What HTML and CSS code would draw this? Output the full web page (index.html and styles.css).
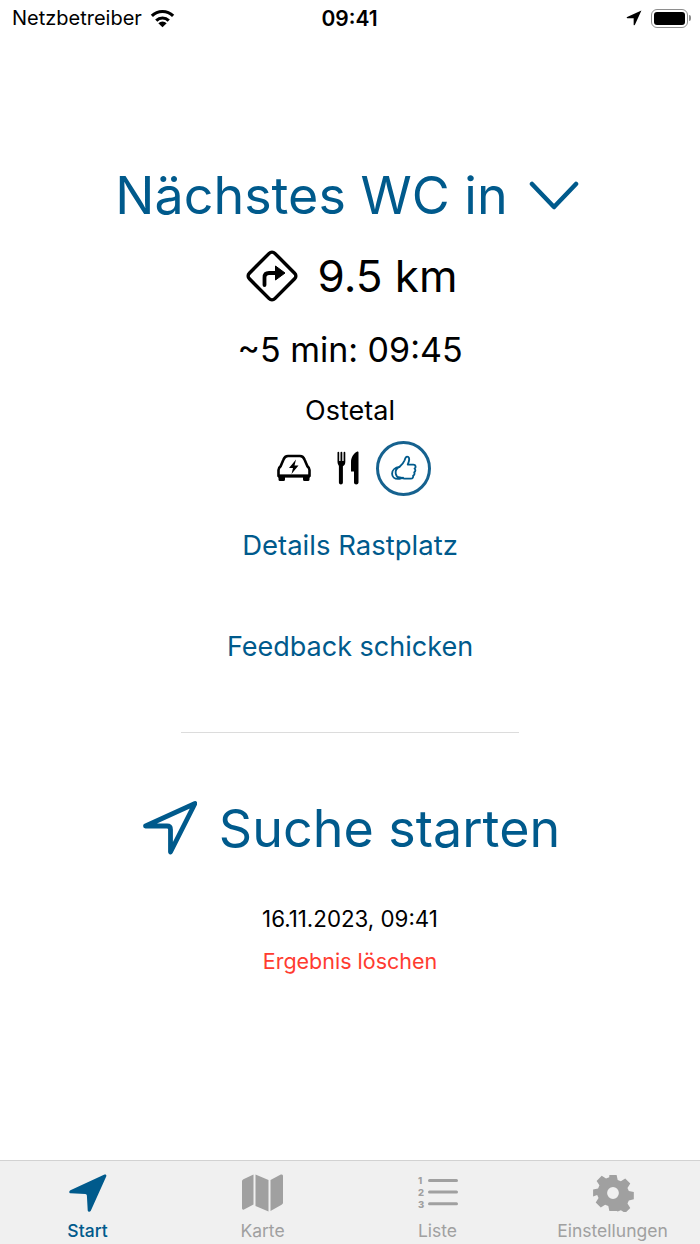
FILE: index.html
```html
<!DOCTYPE html>
<html lang="de">
<head>
  <meta charset="UTF-8">
  <meta name="viewport" content="width=device-width, initial-scale=1.0">
  <link rel="stylesheet" href="styles.css">
</head>
<body>
  <div class="screen">
    <div class="status-bar">
      <div class="status-left">
        <span>Netzbetreiber</span>
        <svg class="wifi" viewBox="0 0 24 18" width="25" height="19">
          <path d="M1.800 6.500A14.500 14.500 0 0 1 22.200 6.500M6 11A8.500 8.500 0 0 1 18 11" fill="none" stroke="#000" stroke-width="3"/>
          <path d="M12 17.500 8 13.500A5.500 5.500 0 0 1 16 13.500z"/>
        </svg>
      </div>
      <div class="status-time">09:41</div>
      <div class="status-right">
        <svg viewBox="0 0 14 14" width="16" height="16"><path d="M13.500.5 1 6.200c-.6.300-.4 1.100.2 1.100h5.500v5.500c0 .6.800.8 1.100.2z"/></svg>
        <div class="battery"><div class="battery-fill"></div></div>
        <div class="battery-cap"></div>
      </div>
    </div>

    <main class="content">
      <div class="title-row">
        <h1 class="title">Nächstes WC in</h1>
        <svg class="chevron" viewBox="0 0 50 30" width="50" height="30">
          <path d="M3 3 25 26 47 3" fill="none" stroke="#005a8c" stroke-width="4.500" stroke-linecap="round" stroke-linejoin="round"/>
        </svg>
      </div>

      <div class="distance-row">
        <svg viewBox="0 0 54 54" width="54" height="54">
          <rect x="9" y="9" width="36" height="36" rx="4" transform="rotate(45 27 27)" fill="none" stroke="#000" stroke-width="3.500"/>
          <path d="M19.500 36v-7.500c0-3 1.500-4.500 4.500-4.500H32" fill="none" stroke="#000" stroke-width="3.800" stroke-linecap="round"/>
          <path d="M30.500 17 40 24 30.500 31z" stroke="#000" stroke-linejoin="round"/>
        </svg>
        <span class="distance">9.5 km</span>
      </div>

      <div class="eta">~5 min: 09:45</div>
      <div class="place">Ostetal</div>

      <div class="feature-row">
        <svg class="icon-car" viewBox="0 0 36 28" width="36" height="28">
          <path d="M2.500 22v-6c0-1.500.8-2.700 2-3.600l3-6.900C8.300 3.300 9.700 2 12 2h12c2.300 0 3.700 1.300 4.500 3.500l3 6.900c1.200.9 2 2.100 2 3.600v6z" fill="none" stroke="#000" stroke-width="2.600" stroke-linejoin="round"/>
          <path d="M2 20.500h32v3H2zM2.500 23h6.500v2.500a1.500 1.500 0 0 1-1.500 1.500H4a1.500 1.500 0 0 1-1.500-1.500zM27 23h6.500v2.500A1.500 1.500 0 0 1 32 27h-3.500a1.500 1.500 0 0 1-1.500-1.500z"/>
          <path d="M20 5.500 13 14h4l-1.500 6 7-8.500h-4z"/>
        </svg>
        <svg class="icon-cutlery" viewBox="0 0 22 34" width="22" height="34">
          <path d="M.5 1.500c0-1 1.700-1 1.700 0V10h1.300V1.500c0-1 1.800-1 1.800 0V10h1.300V1.500c0-1 1.700-1 1.700 0V11c0 2.200-1 3.500-2.400 4.200V31.500c0 2.500-4 2.500-4 0V15.200C2 14.500.5 13.200.5 11z"/>
          <path d="M21.500 1.200V31.500c0 2.500-4.500 2.500-4.500 0V20.500h-3V11c0-4.500 2.500-8.500 6.300-10.400.6-.3 1.200 0 1.200.6z"/>
        </svg>
        <div class="thumb-badge">
          <svg viewBox="0 0 28 28" width="29" height="29">
            <path d="M10 12.500c2-1.800 4.200-4 5.100-6.500.4-1.500.8-3.500 2.400-3.500 2 0 2.300 2.300 1.700 4.500-.3 1.200-.9 2.300-1.100 3.200h5.400c2.500 0 2.800 3 1.200 3.900 1.200 1 .9 2.900-.4 3.500.7 1.200.2 2.800-1 3.200.4 1.500-.5 3-2.200 3h-6.100c-2.500 0-4-1.500-5.500-1.500" fill="none" stroke="#005a8c" stroke-width="1.800" stroke-linejoin="round" stroke-linecap="round"/>
            <path d="M10 12.500c-4 .5-7 3-7 6.500 0 3 2.500 5 5.500 5 2 0 3.600-.8 5-1.200M10 12.500C7 14 6 16.500 6.500 19c.4 2.200 2 3.800 3.500 4.300" fill="none" stroke="#005a8c" stroke-width="1.800" stroke-linecap="round"/>
          </svg>
        </div>
      </div>

      <a class="link details">Details Rastplatz</a>
      <a class="link feedback">Feedback schicken</a>

      <div class="divider"></div>

      <div class="search-row">
        <svg viewBox="0 0 54 54" width="54" height="54">
          <path d="M2.500 25 52 2.500 27.500 51 27.500 28.500C27.500 26 26 25 24 25z" fill="none" stroke="#005a8c" stroke-width="4.800" stroke-linejoin="round"/>
        </svg>
        <span class="search-label">Suche starten</span>
      </div>

      <div class="timestamp">16.11.2023, 09:41</div>
      <a class="clear">Ergebnis löschen</a>
    </main>

    <nav class="tab-bar">
      <div class="tab active">
        <svg viewBox="0 0 38 38" width="38" height="38"><path d="M35.500.6 1.400 16.200C-.2 17-.1 19.200 1.700 19.300l14.600.8c1 .1 1.500.600 1.600 1.600l.8 14.600c.1 1.800 2.300 2 3.100.4L37.200 2.400c.6-1.300-.4-2.400-1.700-1.800z"/></svg>
        <span>Start</span>
      </div>
      <div class="tab">
        <svg viewBox="0 0 41 38" width="41" height="38"><path d="M0 7.500c0-1 .5-1.700 1.400-2.200L11.500.5V30.500L2 35.500c-1 .5-2 0-2-1.200zM13.500.5l13 5.500V37.500L13.500 32zM28.500 6 38.800.6c1-.5 2.200.1 2.200 1.300V28.500c0 1-.5 1.800-1.400 2.200L28.500 37z"/></svg>
        <span>Karte</span>
      </div>
      <div class="tab">
        <svg viewBox="0 0 41 38" width="41" height="38">
          <rect x="11" y="5" width="30" height="3" rx="1.500"/>
          <rect x="11" y="16.600" width="30" height="3" rx="1.500"/>
          <rect x="11" y="28.300" width="30" height="3" rx="1.500"/>
          <text x="1" y="10" class="list-num">1</text>
          <text x="1" y="22" class="list-num">2</text>
          <text x="1" y="34" class="list-num">3</text>
        </svg>
        <span>Liste</span>
      </div>
      <div class="tab">
        <svg class="gear" viewBox="0 0 42 42" width="42" height="42"><path fill-rule="evenodd" d="M17 1h8l1.200 5.600 3.500 1.500 4.800-3.100 5.600 5.600-3.100 4.800 1.500 3.500 5.500 1.100v8l-5.500 1.200-1.500 3.500 3.100 4.800-5.600 5.600-4.800-3.100-3.500 1.500L25 41h-8l-1.200-5.600-3.500-1.500-4.800 3.100-5.600-5.600 3.100-4.800-1.500-3.500L-1 25v-8l5.500-1.100L6 12.400 2.900 7.600l5.600-5.600 4.800 3.100 3.500-1.500zM21 14.500a6.500 6.500 0 1 0 0 13 6.500 6.500 0 0 0 0-13z"/></svg>
        <span>Einstellungen</span>
      </div>
    </nav>
  </div>
</body>
</html>
```

FILE: styles.css
```css
* {
  box-sizing: border-box;
}

body {
  margin: 0;
  background-color: #fff;
  font-family: 'Inter', 'Liberation Sans', sans-serif;
  color: #000;
}

.screen {
  width: 700px;
  height: 1244px;
  display: flex;
  flex-direction: column;
  overflow: hidden;
}

.status-bar {
  height: 36px;
  flex-shrink: 0;
  display: grid;
  grid-template-columns: 1fr auto 1fr;
  align-items: center;
  padding: 0 9px 0 12px;
  font-size: 20px;
}

.status-left {
  display: flex;
  align-items: center;
  gap: 8px;
}

.status-time {
  font-size: 21px;
  font-weight: 600;
  margin-right: 4px;
}

.status-right {
  display: flex;
  align-items: center;
  justify-content: flex-end;
  gap: 9px;
}

.battery {
  width: 37px;
  height: 19px;
  border: 1.500px solid #8e8e8e;
  border-radius: 6px;
  padding: 2px;
}

.battery-fill {
  width: 100%;
  height: 100%;
  background-color: #000;
  border-radius: 3px;
}

.battery-cap {
  width: 2px;
  height: 6px;
  margin-left: -8px;
  background-color: #8e8e8e;
  border-radius: 0 2px 2px 0;
}

.content {
  flex: 1;
  display: flex;
  flex-direction: column;
  align-items: center;
  padding-top: 122px;
}

.title-row {
  display: flex;
  align-items: center;
  gap: 21px;
  height: 74px;
  padding-right: 6px;
}

.title {
  margin: 0;
  font-size: 52px;
  font-weight: 400;
  color: #005a8c;
}

.chevron {
  margin-top: 2px;
}

.distance-row {
  display: flex;
  align-items: center;
  gap: 18px;
  margin-top: 16px;
  margin-left: 3px;
  height: 56px;
}

.distance {
  font-size: 44px;
}

.eta {
  font-size: 34px;
  margin-top: 24px;
  line-height: 44px;
}

.place {
  font-size: 27px;
  margin-top: 22px;
  line-height: 34px;
}

.feature-row {
  display: flex;
  align-items: center;
  margin-top: 12px;
  margin-left: 6px;
  height: 56px;
}

.icon-cutlery {
  margin-left: 25px;
}

.thumb-badge {
  width: 55px;
  height: 55px;
  margin-left: 17px;
  border: 3px solid #16628f;
  border-radius: 50%;
  display: flex;
  align-items: center;
  justify-content: center;
}

.link {
  color: #005a8c;
  line-height: 34px;
}

.details {
  font-size: 27.500px;
  margin-top: 32px;
}

.feedback {
  font-size: 27px;
  margin-top: 68px;
}

.divider {
  width: 338px;
  height: 1px;
  background-color: #dcdcdc;
  margin-top: 68px;
}

.search-row {
  display: flex;
  align-items: center;
  gap: 22px;
  margin-top: 62px;
  margin-left: 3px;
  height: 66px;
}

.search-label {
  font-size: 52px;
  color: #005a8c;
}

.timestamp {
  font-size: 22.300px;
  margin-top: 44px;
  line-height: 28px;
}

.clear {
  font-size: 21.500px;
  color: #ff3b30;
  margin-top: 14px;
  line-height: 28px;
}

.tab-bar {
  height: 84px;
  flex-shrink: 0;
  display: grid;
  grid-template-columns: repeat(4, 1fr);
  background-color: #f0f0f0;
  border-top: 1px solid #d2d2d2;
}

.tab {
  display: flex;
  flex-direction: column;
  align-items: center;
  padding-top: 13px;
  color: #a0a0a0;
  font-size: 17.500px;
  font-weight: 400;
  fill: #a0a0a0;
}

.tab svg {
  display: block;
  height: 38px;
}

.tab span {
  margin-top: 9px;
  line-height: 20px;
}

.tab.active {
  color: #005a8c;
  fill: #005a8c;
  font-weight: 500;
}

.list-num {
  font-size: 9.500px;
  font-weight: 800;
}
```
